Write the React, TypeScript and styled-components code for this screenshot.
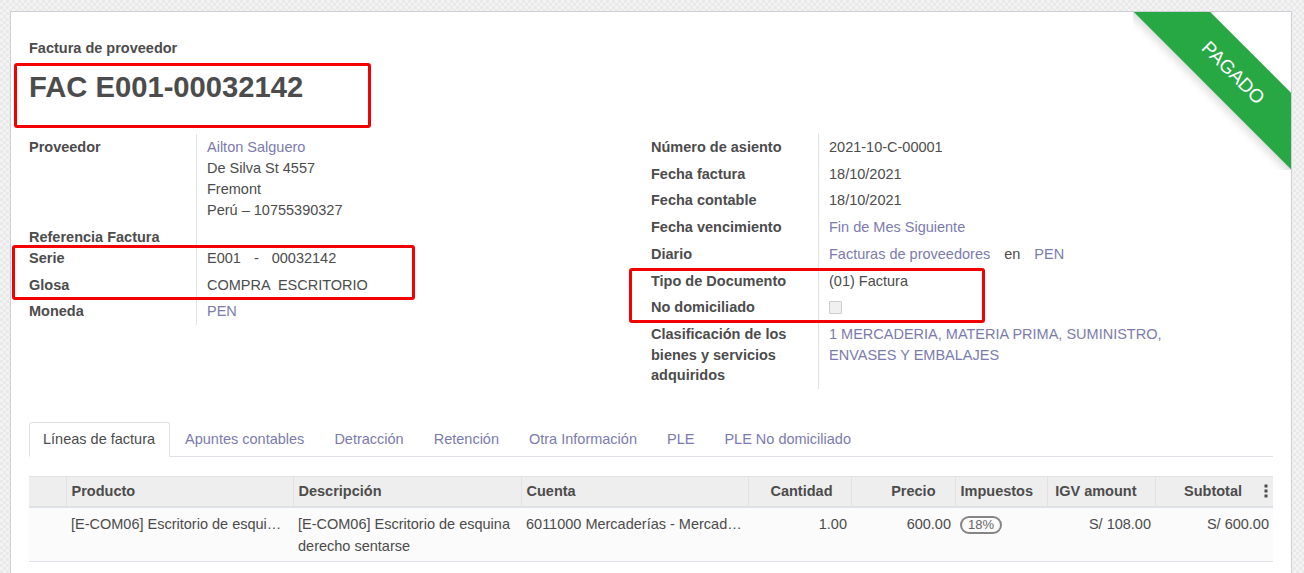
import React from "react";
import styled, { createGlobalStyle, css } from "styled-components";

const GlobalStyle = createGlobalStyle`
  html, body { margin: 0; padding: 0; }
  body {
    font-family: "Liberation Sans", Arial, sans-serif;
    font-size: 14.5px;
    color: #4c4c4c;
    background-color: #ededed;
    background-image: repeating-conic-gradient(#f3f3f3 0% 25%, #e9e9e9 0% 50%);
    background-size: 6px 6px;
    overflow: hidden;
  }
`;

const Page = styled.div`
  padding: 11px 12px 0 10px;
  height: 573px;
  box-sizing: border-box;
`;

const Sheet = styled.div`
  position: relative;
  background: #fff;
  border: 1px solid #cfcfd8;
  border-bottom: none;
  min-height: 600px;
  padding: 26px 18px 0 18px;
  overflow: hidden;
`;

const RibbonWrap = styled.div`
  position: absolute;
  top: 0;
  right: 0;
  width: 158px;
  height: 158px;
  overflow: hidden;
  pointer-events: none;
`;

const RibbonBand = styled.span`
  position: absolute;
  left: -50px;
  top: 34px;
  width: 300px;
  height: 54px;
  background: #28a745;
  color: #fff;
  transform: rotate(45deg);
  display: flex;
  align-items: center;
  justify-content: center;
  font-size: 19px;
  text-transform: uppercase;
  box-shadow: 0 4px 8px rgba(0, 0, 0, 0.15);
`;

const Marked = styled.div<{ $top: number; $left: number; $width: number; $height: number }>`
  position: relative;
  &::after {
    content: "";
    position: absolute;
    top: ${(p) => p.$top}px;
    left: ${(p) => p.$left}px;
    width: ${(p) => p.$width}px;
    height: ${(p) => p.$height}px;
    box-sizing: border-box;
    border: 3px solid #f40000;
    border-radius: 3px;
    pointer-events: none;
  }
`;

const Subtitle = styled.div`
  font-weight: bold;
  line-height: 21px;
`;

const Heading = styled.h1`
  margin: 8px 0 0;
  font-size: 29.2px;
  line-height: 40px;
  font-weight: bold;
  color: #4c4c4c;
`;

const Groups = styled.div`
  display: grid;
  grid-template-columns: 1fr 1fr;
  margin-top: 27px;
  align-items: start;
`;

const Group = styled.div<{ $padRight?: number }>`
  display: flex;
  flex-direction: column;
  padding-right: ${(p) => p.$padRight ?? 0}px;
`;

const Row = styled.div<{ $compact?: boolean }>`
  display: grid;
  grid-template-columns: 168px 1fr;
  line-height: 20.7px;
  ${(p) =>
    p.$compact &&
    css`
      height: 21px;
    `}
`;

const Label = styled.div`
  font-weight: bold;
  border-right: 1px solid #e2e2e2;
  padding: 3px 8px 3px 0;
`;

const Value = styled.div<{ $lh?: number }>`
  padding: 3px 10px;
  display: flex;
  flex-direction: column;
  ${(p) =>
    p.$lh &&
    css`
      line-height: ${p.$lh}px;
    `}
`;

const InlineValue = styled.div<{ $gap?: number }>`
  padding: 3px 10px;
  display: flex;
  gap: ${(p) => p.$gap ?? 14}px;
  white-space: pre;
`;

const Link = styled.span`
  color: #7c7bad;
`;

const Checkbox = styled.span`
  display: block;
  width: 13px;
  height: 13px;
  margin-top: 4px;
  box-sizing: border-box;
  border: 1px solid #cdcdcd;
  background: #f0f0f0;
  border-radius: 1px;
`;

const Tabs = styled.div`
  display: flex;
  border-bottom: 1px solid #dee2e6;
  margin-top: 33px;
`;

const Tab = styled.div<{ $active?: boolean }>`
  padding: 6px 14px;
  line-height: 21px;
  margin-bottom: -1px;
  border: 1px solid transparent;
  border-radius: 3px 3px 0 0;
  color: ${(p) => (p.$active ? "#4c4c4c" : "#7c7bad")};
  ${(p) =>
    p.$active &&
    css`
      padding-left: 13px;
      border-color: #dee2e6 #dee2e6 #fff;
      background: #fff;
    `}
`;

const Table = styled.table`
  width: 100%;
  border-collapse: collapse;
  table-layout: fixed;
  margin-top: 19px;
  line-height: 21px;
`;

const Th = styled.th<{ $align?: "left" | "right"; $pr?: number }>`
  background: #eeeeee;
  font-weight: bold;
  text-align: ${(p) => p.$align ?? "left"};
  padding: 4px ${(p) => p.$pr ?? 4}px 4px 5px;
  border-top: 1px solid #e2e2e2;
  border-bottom: 2px solid #dee2e6;
  border-left: 1px solid #e2e2e2;
  white-space: nowrap;
  overflow: hidden;
  &:first-child {
    border-left: none;
  }
`;

const Td = styled.td<{ $align?: "left" | "right"; $wrap?: boolean }>`
  background: #fbfbfb;
  vertical-align: top;
  text-align: ${(p) => p.$align ?? "left"};
  padding: 5px 4px 4px 5px;
  line-height: 22px;
  border-bottom: 1px solid #dee2e6;
  ${(p) =>
    !p.$wrap &&
    css`
      white-space: nowrap;
      overflow: hidden;
      text-overflow: ellipsis;
    `}
`;

const TaxTag = styled.span`
  display: inline-block;
  font-size: 13px;
  line-height: 14px;
  padding: 0 6px;
  border: 2px solid #858585;
  border-radius: 10px;
  color: #666;
`;

const DotsIcon = styled.svg`
  margin-left: 22px;
  vertical-align: -2px;
`;

const columns = [37, 227, 228, 227, 103, 104, 92, 108];

export default function App() {
  return (
    <>
      <GlobalStyle />
      <Page>
        <Sheet>
          <RibbonWrap>
            <RibbonBand>Pagado</RibbonBand>
          </RibbonWrap>

          <Subtitle>Factura de proveedor</Subtitle>
          <Marked $top={-4} $left={-15} $width={357} $height={65}>
            <Heading>FAC E001-00032142</Heading>
          </Marked>

          <Groups>
            <Group>
              <Row>
                <Label>Proveedor</Label>
                <Value $lh={21}>
                  <Link>Ailton Salguero</Link>
                  <span>De Silva St 4557</span>
                  <span>Fremont</span>
                  <span>Perú – 10755390327</span>
                </Value>
              </Row>
              <Row $compact>
                <Label>Referencia Factura</Label>
                <Value />
              </Row>
              <Marked $top={0} $left={-17} $width={403} $height={55}>
                <Row>
                  <Label>Serie</Label>
                  <InlineValue $gap={13}>
                    <span>E001</span>
                    <span>-</span>
                    <span>00032142</span>
                  </InlineValue>
                </Row>
                <Row>
                  <Label>Glosa</Label>
                  <InlineValue>
                    <span>COMPRA  ESCRITORIO</span>
                  </InlineValue>
                </Row>
              </Marked>
              <Row>
                <Label>Moneda</Label>
                <Value>
                  <Link>PEN</Link>
                </Value>
              </Row>
            </Group>

            <Group $padRight={60}>
              <Row>
                <Label>Número de asiento</Label>
                <Value>2021-10-C-00001</Value>
              </Row>
              <Row>
                <Label>Fecha factura</Label>
                <Value>18/10/2021</Value>
              </Row>
              <Row>
                <Label>Fecha contable</Label>
                <Value>18/10/2021</Value>
              </Row>
              <Row>
                <Label>Fecha vencimiento</Label>
                <Value>
                  <Link>Fin de Mes Siguiente</Link>
                </Value>
              </Row>
              <Row>
                <Label>Diario</Label>
                <InlineValue>
                  <Link>Facturas de proveedores</Link>
                  <span>en</span>
                  <Link>PEN</Link>
                </InlineValue>
              </Row>
              <Marked $top={0} $left={-22} $width={356} $height={55}>
                <Row>
                  <Label>Tipo de Documento</Label>
                  <Value>(01) Factura</Value>
                </Row>
                <Row>
                  <Label>No domiciliado</Label>
                  <Value>
                    <Checkbox />
                  </Value>
                </Row>
              </Marked>
              <Row>
                <Label>Clasificación de los bienes y servicios adquiridos</Label>
                <Value>
                  <Link>1 MERCADERIA, MATERIA PRIMA, SUMINISTRO, ENVASES Y EMBALAJES</Link>
                </Value>
              </Row>
            </Group>
          </Groups>

          <Tabs>
            <Tab $active>Líneas de factura</Tab>
            <Tab>Apuntes contables</Tab>
            <Tab>Detracción</Tab>
            <Tab>Retención</Tab>
            <Tab>Otra Información</Tab>
            <Tab>PLE</Tab>
            <Tab>PLE No domiciliado</Tab>
          </Tabs>

          <Table>
            <colgroup>
              {columns.map((w, i) => (
                <col key={i} style={{ width: w }} />
              ))}
              <col />
            </colgroup>
            <thead>
              <tr>
                <Th />
                <Th>Producto</Th>
                <Th>Descripción</Th>
                <Th>Cuenta</Th>
                <Th $align="right" $pr={18}>Cantidad</Th>
                <Th $align="right" $pr={19}>Precio</Th>
                <Th>Impuestos</Th>
                <Th $align="right" $pr={18}>IGV amount</Th>
                <Th $align="right" $pr={5}>
                  Subtotal
                  <DotsIcon width="4" height="14" viewBox="0 0 4 14">
                    <rect x="0.5" y="0.5" width="3" height="3" fill="#4c4c4c" />
                    <rect x="0.5" y="5.5" width="3" height="3" fill="#4c4c4c" />
                    <rect x="0.5" y="10.5" width="3" height="3" fill="#4c4c4c" />
                  </DotsIcon>
                </Th>
              </tr>
            </thead>
            <tbody>
              <tr>
                <Td />
                <Td>[E-COM06] Escritorio de esquina derecho sentarse</Td>
                <Td $wrap>[E-COM06] Escritorio de esquina derecho sentarse</Td>
                <Td>6011000 Mercaderías - Mercaderías manufacturadas</Td>
                <Td $align="right">1.00</Td>
                <Td $align="right">600.00</Td>
                <Td>
                  <TaxTag>18%</TaxTag>
                </Td>
                <Td $align="right">S/ 108.00</Td>
                <Td $align="right">S/ 600.00</Td>
              </tr>
            </tbody>
          </Table>
        </Sheet>
      </Page>
    </>
  );
}
